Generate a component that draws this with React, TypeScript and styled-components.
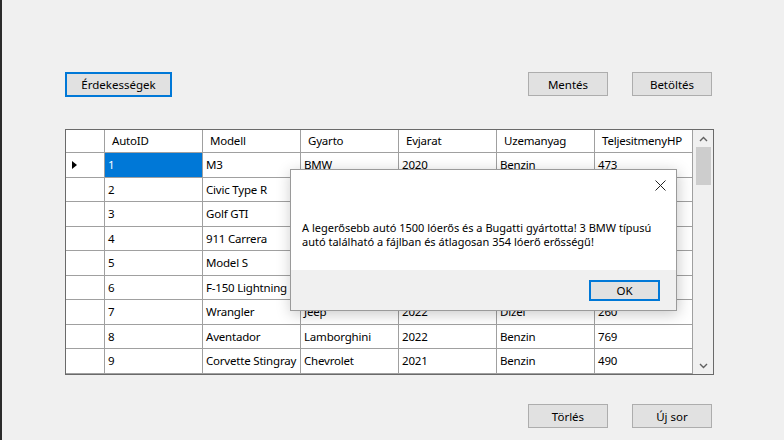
import React from "react";
import styled, { createGlobalStyle } from "styled-components";

const GlobalStyle = createGlobalStyle`
  html, body { margin: 0; padding: 0; background: #f0f0f0; }
  * { box-sizing: border-box; }
  body { font-family: "Noto Sans", "Open Sans", sans-serif; }
`;

const FONT = `"Noto Sans", "Open Sans", sans-serif`;

const Window = styled.div`
  position: relative;
  width: 784px;
  height: 440px;
  overflow: hidden;
  background: #f0f0f0;
  border-left: 2px solid #2b2b2b;
  padding: 72px 0 0 63px;
  display: flex;
  flex-direction: column;
  font-family: ${FONT};
  font-size: 11px;
  color: #000;
`;

const Bar = styled.div<{ $end?: boolean }>`
  width: 647px;
  display: flex;
  justify-content: ${(p) => (p.$end ? "flex-end" : "space-between")};
  align-items: flex-start;
`;

const Group = styled.div`
  display: flex;
  gap: 24px;
`;

const Button = styled.button<{ $w: number; $h?: number; $focused?: boolean }>`
  width: ${(p) => p.$w}px;
  height: ${(p) => p.$h ?? 24}px;
  padding: 0;
  background: #e1e1e1;
  border: ${(p) => (p.$focused ? "2px solid #0078d7" : "1px solid #adadad")};
  font-family: ${FONT};
  font-size: 11.5px;
  color: #000;
  display: flex;
  align-items: center;
  justify-content: center;
`;

const GridBox = styled.div`
  margin-top: 32px;
  margin-bottom: 29px;
  width: 649px;
  height: 246px;
  border: 1px solid #6a6a6a;
  display: flex;
  background: #f0f0f0;
`;

const Table = styled.div`
  display: grid;
  grid-template-columns: 39px repeat(6, 98px);
  grid-template-rows: 23px repeat(9, 24.5px);
  align-content: start;
  background: #fff;
  width: 627px;
  height: 100%;
  overflow: hidden;
`;

const Cell = styled.div<{ $header?: boolean; $selected?: boolean }>`
  border-right: 1px solid #a0a0a0;
  border-bottom: 1px solid #a0a0a0;
  background: ${(p) => (p.$selected ? "#0078d7" : "#fff")};
  color: ${(p) => (p.$selected ? "#fff" : "#000")};
  padding-left: ${(p) => (p.$header ? 7 : 3)}px;
  display: flex;
  align-items: center;
  white-space: nowrap;
  overflow: hidden;
  line-height: 1;
  font-size: 11.5px;
  letter-spacing: -0.2px;
`;

const RowHead = styled.div`
  border-right: 1px solid #a0a0a0;
  border-bottom: 1px solid #a0a0a0;
  background: #fff;
  display: flex;
  align-items: center;
  padding-left: 6px;
`;

const Arrow = styled.div`
  width: 0;
  height: 0;
  border-top: 4px solid transparent;
  border-bottom: 4px solid transparent;
  border-left: 5px solid #000;
`;

const ScrollBar = styled.div`
  width: 20px;
  height: 100%;
  background: #f0f0f0;
  display: flex;
  flex-direction: column;
  align-items: center;
`;

const ScrollArrow = styled.div`
  width: 100%;
  height: 17px;
  display: flex;
  align-items: center;
  justify-content: center;
`;

const Thumb = styled.div`
  width: 15px;
  height: 38px;
  background: #cdcdcd;
`;

const Spacer = styled.div`
  flex: 1;
`;

const Dialog = styled.div`
  position: absolute;
  left: 288px;
  top: 169px;
  width: 387px;
  height: 142px;
  background: #fff;
  border: 1px solid #9a9a9a;
  box-shadow: 1px 3px 14px rgba(0, 0, 0, 0.22);
  display: flex;
  flex-direction: column;
`;

const TitleBar = styled.div`
  height: 30px;
  display: flex;
  justify-content: flex-end;
  align-items: center;
  padding-right: 10px;
`;

const Message = styled.div`
  flex: 1;
  display: flex;
  align-items: center;
  padding: 0 14px 0 11px;
  font-size: 11px;
  line-height: 14.5px;
  color: #000;
`;

const Footer = styled.div`
  height: 40px;
  background: #f0f0f0;
  display: flex;
  align-items: center;
  justify-content: flex-end;
  padding-right: 16px;
`;

const columns = ["AutoID", "Modell", "Gyarto", "Evjarat", "Uzemanyag", "TeljesitmenyHP"];

const rows: string[][] = [
  ["1", "M3", "BMW", "2020", "Benzin", "473"],
  ["2", "Civic Type R", "", "", "", ""],
  ["3", "Golf GTI", "", "", "", ""],
  ["4", "911 Carrera", "", "", "", ""],
  ["5", "Model S", "", "", "", ""],
  ["6", "F-150 Lightning", "", "", "", ""],
  ["7", "Wrangler", "Jeep", "2022", "Dizel", "260"],
  ["8", "Aventador", "Lamborghini", "2022", "Benzin", "769"],
  ["9", "Corvette Stingray", "Chevrolet", "2021", "Benzin", "490"],
];

const Chevron = ({ up }: { up?: boolean }) => (
  <svg width="9" height="6" viewBox="0 0 9 6">
    <path
      d={up ? "M1 5 L4.5 1.5 L8 5" : "M1 1 L4.5 4.5 L8 1"}
      fill="none"
      stroke="#606060"
      strokeWidth="1.4"
    />
  </svg>
);

const CloseIcon = () => (
  <svg width="11" height="11" viewBox="0 0 11 11">
    <path d="M0.5 0.5 L10.5 10.5 M10.5 0.5 L0.5 10.5" stroke="#222" strokeWidth="1" fill="none" />
  </svg>
);

export default function App() {
  return (
    <>
      <GlobalStyle />
      <Window>
        <Bar>
          <Button $w={107} $h={25} $focused>
            Érdekességek
          </Button>
          <Group>
            <Button $w={80}>Mentés</Button>
            <Button $w={80}>Betöltés</Button>
          </Group>
        </Bar>

        <GridBox>
          <Table>
            <RowHead />
            {columns.map((c) => (
              <Cell key={c} $header>
                {c}
              </Cell>
            ))}
            {rows.map((r, i) => (
              <React.Fragment key={r[0]}>
                <RowHead>{i === 0 && <Arrow />}</RowHead>
                {r.map((v, j) => (
                  <Cell key={j} $selected={i === 0 && j === 0}>
                    {v}
                  </Cell>
                ))}
              </React.Fragment>
            ))}
          </Table>
          <ScrollBar>
            <ScrollArrow>
              <Chevron up />
            </ScrollArrow>
            <Thumb />
            <Spacer />
            <ScrollArrow>
              <Chevron />
            </ScrollArrow>
          </ScrollBar>
        </GridBox>

        <Bar $end>
          <Group>
            <Button $w={80}>Törlés</Button>
            <Button $w={80}>Új sor</Button>
          </Group>
        </Bar>

        <Dialog>
          <TitleBar>
            <CloseIcon />
          </TitleBar>
          <Message>
            A legerősebb autó 1500 lóerős és a Bugatti gyártotta! 3 BMW típusú autó található a fájlban és
            átlagosan 354 lóerő erősségű!
          </Message>
          <Footer>
            <Button $w={71} $h={21} $focused>
              OK
            </Button>
          </Footer>
        </Dialog>
      </Window>
    </>
  );
}
